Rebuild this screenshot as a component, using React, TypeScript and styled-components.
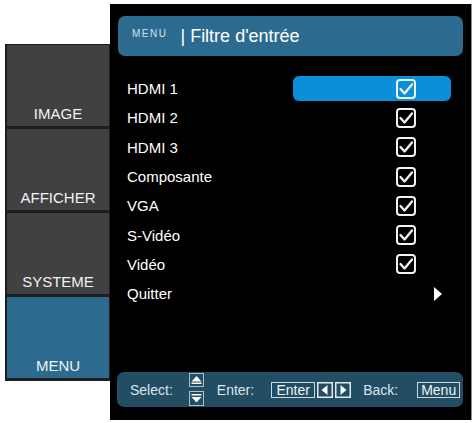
import React from "react";
import styled, { createGlobalStyle } from "styled-components";

const Global = createGlobalStyle`
  html, body { margin: 0; padding: 0; background: #ffffff; }
  body { font-family: "Liberation Sans", Arial, sans-serif; }
`;

const Page = styled.div`
  display: flex;
  align-items: flex-start;
  padding: 4px 0 0 5px;
`;

const Sidebar = styled.div`
  margin-top: 40px;
  width: 105px;
  box-sizing: border-box;
  background: #1d1d1d;
  padding: 1px 1px 3px 2px;
  display: flex;
  flex-direction: column;
  gap: 3px;
`;

const Tile = styled.div<{ $active?: boolean }>`
  height: 81px;
  box-sizing: border-box;
  background: ${(p) => (p.$active ? "#2c6b8f" : "#414141")};
  display: flex;
  align-items: flex-end;
  justify-content: center;
  padding-bottom: 4px;
  font-size: 15px;
  color: #f2f2f2;
`;

const Panel = styled.div`
  width: 361px;
  height: 416px;
  background: #000;
  border-right: 1px solid #8c8c8c;
  display: flex;
  flex-direction: column;
`;

const Header = styled.div`
  margin: 12px 0 0 8px;
  width: 345px;
  height: 40px;
  box-sizing: border-box;
  border-radius: 7px;
  background: #2c6b8f;
  display: flex;
  align-items: center;
  padding-left: 14px;
`;

const HeaderSmall = styled.span`
  font-size: 10px;
  letter-spacing: 1.5px;
  color: #cfe2ee;
  margin-right: 13px;
  margin-bottom: 5px;
`;

const HeaderTitle = styled.span`
  font-size: 18px;
  color: #ffffff;
`;

const List = styled.div`
  margin-top: 18px;
  display: flex;
  flex-direction: column;
`;

const Row = styled.div`
  height: 29.3px;
  display: flex;
  align-items: center;
`;

const Label = styled.span`
  flex: 1;
  padding-left: 17px;
  font-size: 15px;
  color: #ffffff;
`;

const ValueCell = styled.div<{ $selected?: boolean; $arrow?: boolean }>`
  width: 158px;
  height: 25px;
  margin-right: 20px;
  box-sizing: border-box;
  border-radius: 6px;
  background: ${(p) => (p.$selected ? "#0a8fd8" : "transparent")};
  display: flex;
  align-items: center;
  justify-content: flex-end;
  padding-right: ${(p) => (p.$arrow ? "9px" : "35px")};
`;

const BottomBar = styled.div`
  margin: auto 0 13px 7px;
  width: 346px;
  height: 35px;
  box-sizing: border-box;
  border-radius: 7px;
  background: #234d63;
  display: flex;
  align-items: center;
  padding-left: 13px;
  font-size: 14px;
  color: #dbe5ea;
`;

const Hint = styled.span<{ $ml: number }>`
  margin-left: ${(p) => p.$ml}px;
`;

const KeyStack = styled.div`
  margin-left: 16px;
  display: flex;
  flex-direction: column;
  gap: 4px;
`;

const KeyBox = styled.span<{ $ml: number; $w: number }>`
  margin-left: ${(p) => p.$ml}px;
  height: 16px;
  min-width: ${(p) => p.$w}px;
  box-sizing: border-box;
  border: 1px solid #c9d9e2;
  display: inline-flex;
  align-items: center;
  justify-content: center;
  font-size: 14px;
  color: #eef4f7;
  line-height: 1;
`;

const ArrowSlot = styled.span`
  margin-left: 2px;
  display: inline-flex;
`;

const Check = () => (
  <svg width="20" height="20" viewBox="0 0 20 20">
    <rect x="1" y="1" width="18" height="18" rx="3" fill="none" stroke="#f2f2f2" strokeWidth="2" />
    <path d="M4.5 10 L8.5 14.5 L16 5.5" fill="none" stroke="#f2f2f2" strokeWidth="2.3" strokeLinecap="round" strokeLinejoin="round" />
  </svg>
);

const RightArrow = () => (
  <svg width="8" height="14" viewBox="0 0 8 14">
    <path d="M0 0 L8 7 L0 14 Z" fill="#ffffff" />
  </svg>
);

const UpKey = () => (
  <svg width="15" height="14" viewBox="0 0 15 14">
    <rect x="0.5" y="0.5" width="14" height="13" fill="none" stroke="#a9c2cf" strokeWidth="1" />
    <path d="M2.5 8.5 L7.5 3 L12.5 8.5 Z" fill="#ffffff" />
    <rect x="2.5" y="9.5" width="10" height="1.5" fill="#ffffff" />
  </svg>
);

const DownKey = () => (
  <svg width="15" height="15" viewBox="0 0 15 15">
    <rect x="0.5" y="0.5" width="14" height="14" fill="none" stroke="#a9c2cf" strokeWidth="1" />
    <rect x="2.5" y="3" width="10" height="1.5" fill="#ffffff" />
    <path d="M2.5 6 L12.5 6 L7.5 11.5 Z" fill="#ffffff" />
  </svg>
);

const ArrowKey = ({ dir }: { dir: "left" | "right" }) => (
  <svg width="16" height="16" viewBox="0 0 16 16">
    <rect x="0.75" y="0.75" width="14.5" height="14.5" fill="none" stroke="#dfe9ee" strokeWidth="1.5" />
    {dir === "left" ? (
      <path d="M10.5 3 L4.5 8 L10.5 13 Z" fill="#ffffff" />
    ) : (
      <path d="M5.5 3 L11.5 8 L5.5 13 Z" fill="#ffffff" />
    )}
  </svg>
);

const tabs = ["IMAGE", "AFFICHER", "SYSTEME", "MENU"];
const inputs = ["HDMI 1", "HDMI 2", "HDMI 3", "Composante", "VGA", "S-Vidéo", "Vidéo"];

export default function App() {
  return (
    <>
      <Global />
      <Page>
        <Sidebar>
          {tabs.map((t) => (
            <Tile key={t} $active={t === "MENU"}>
              {t}
            </Tile>
          ))}
        </Sidebar>
        <Panel>
          <Header>
            <HeaderSmall>MENU</HeaderSmall>
            <HeaderTitle>| Filtre d'entrée</HeaderTitle>
          </Header>
          <List>
            {inputs.map((name, i) => (
              <Row key={name}>
                <Label>{name}</Label>
                <ValueCell $selected={i === 0}>
                  <Check />
                </ValueCell>
              </Row>
            ))}
            <Row>
              <Label>Quitter</Label>
              <ValueCell $arrow>
                <RightArrow />
              </ValueCell>
            </Row>
          </List>
          <BottomBar>
            <span>Select:</span>
            <KeyStack>
              <UpKey />
              <DownKey />
            </KeyStack>
            <Hint $ml={13}>Enter:</Hint>
            <KeyBox $ml={17} $w={44}>Enter</KeyBox>
            <ArrowSlot>
              <ArrowKey dir="left" />
            </ArrowSlot>
            <ArrowSlot>
              <ArrowKey dir="right" />
            </ArrowSlot>
            <Hint $ml={12}>Back:</Hint>
            <KeyBox $ml={19} $w={43}>Menu</KeyBox>
          </BottomBar>
        </Panel>
      </Page>
    </>
  );
}
